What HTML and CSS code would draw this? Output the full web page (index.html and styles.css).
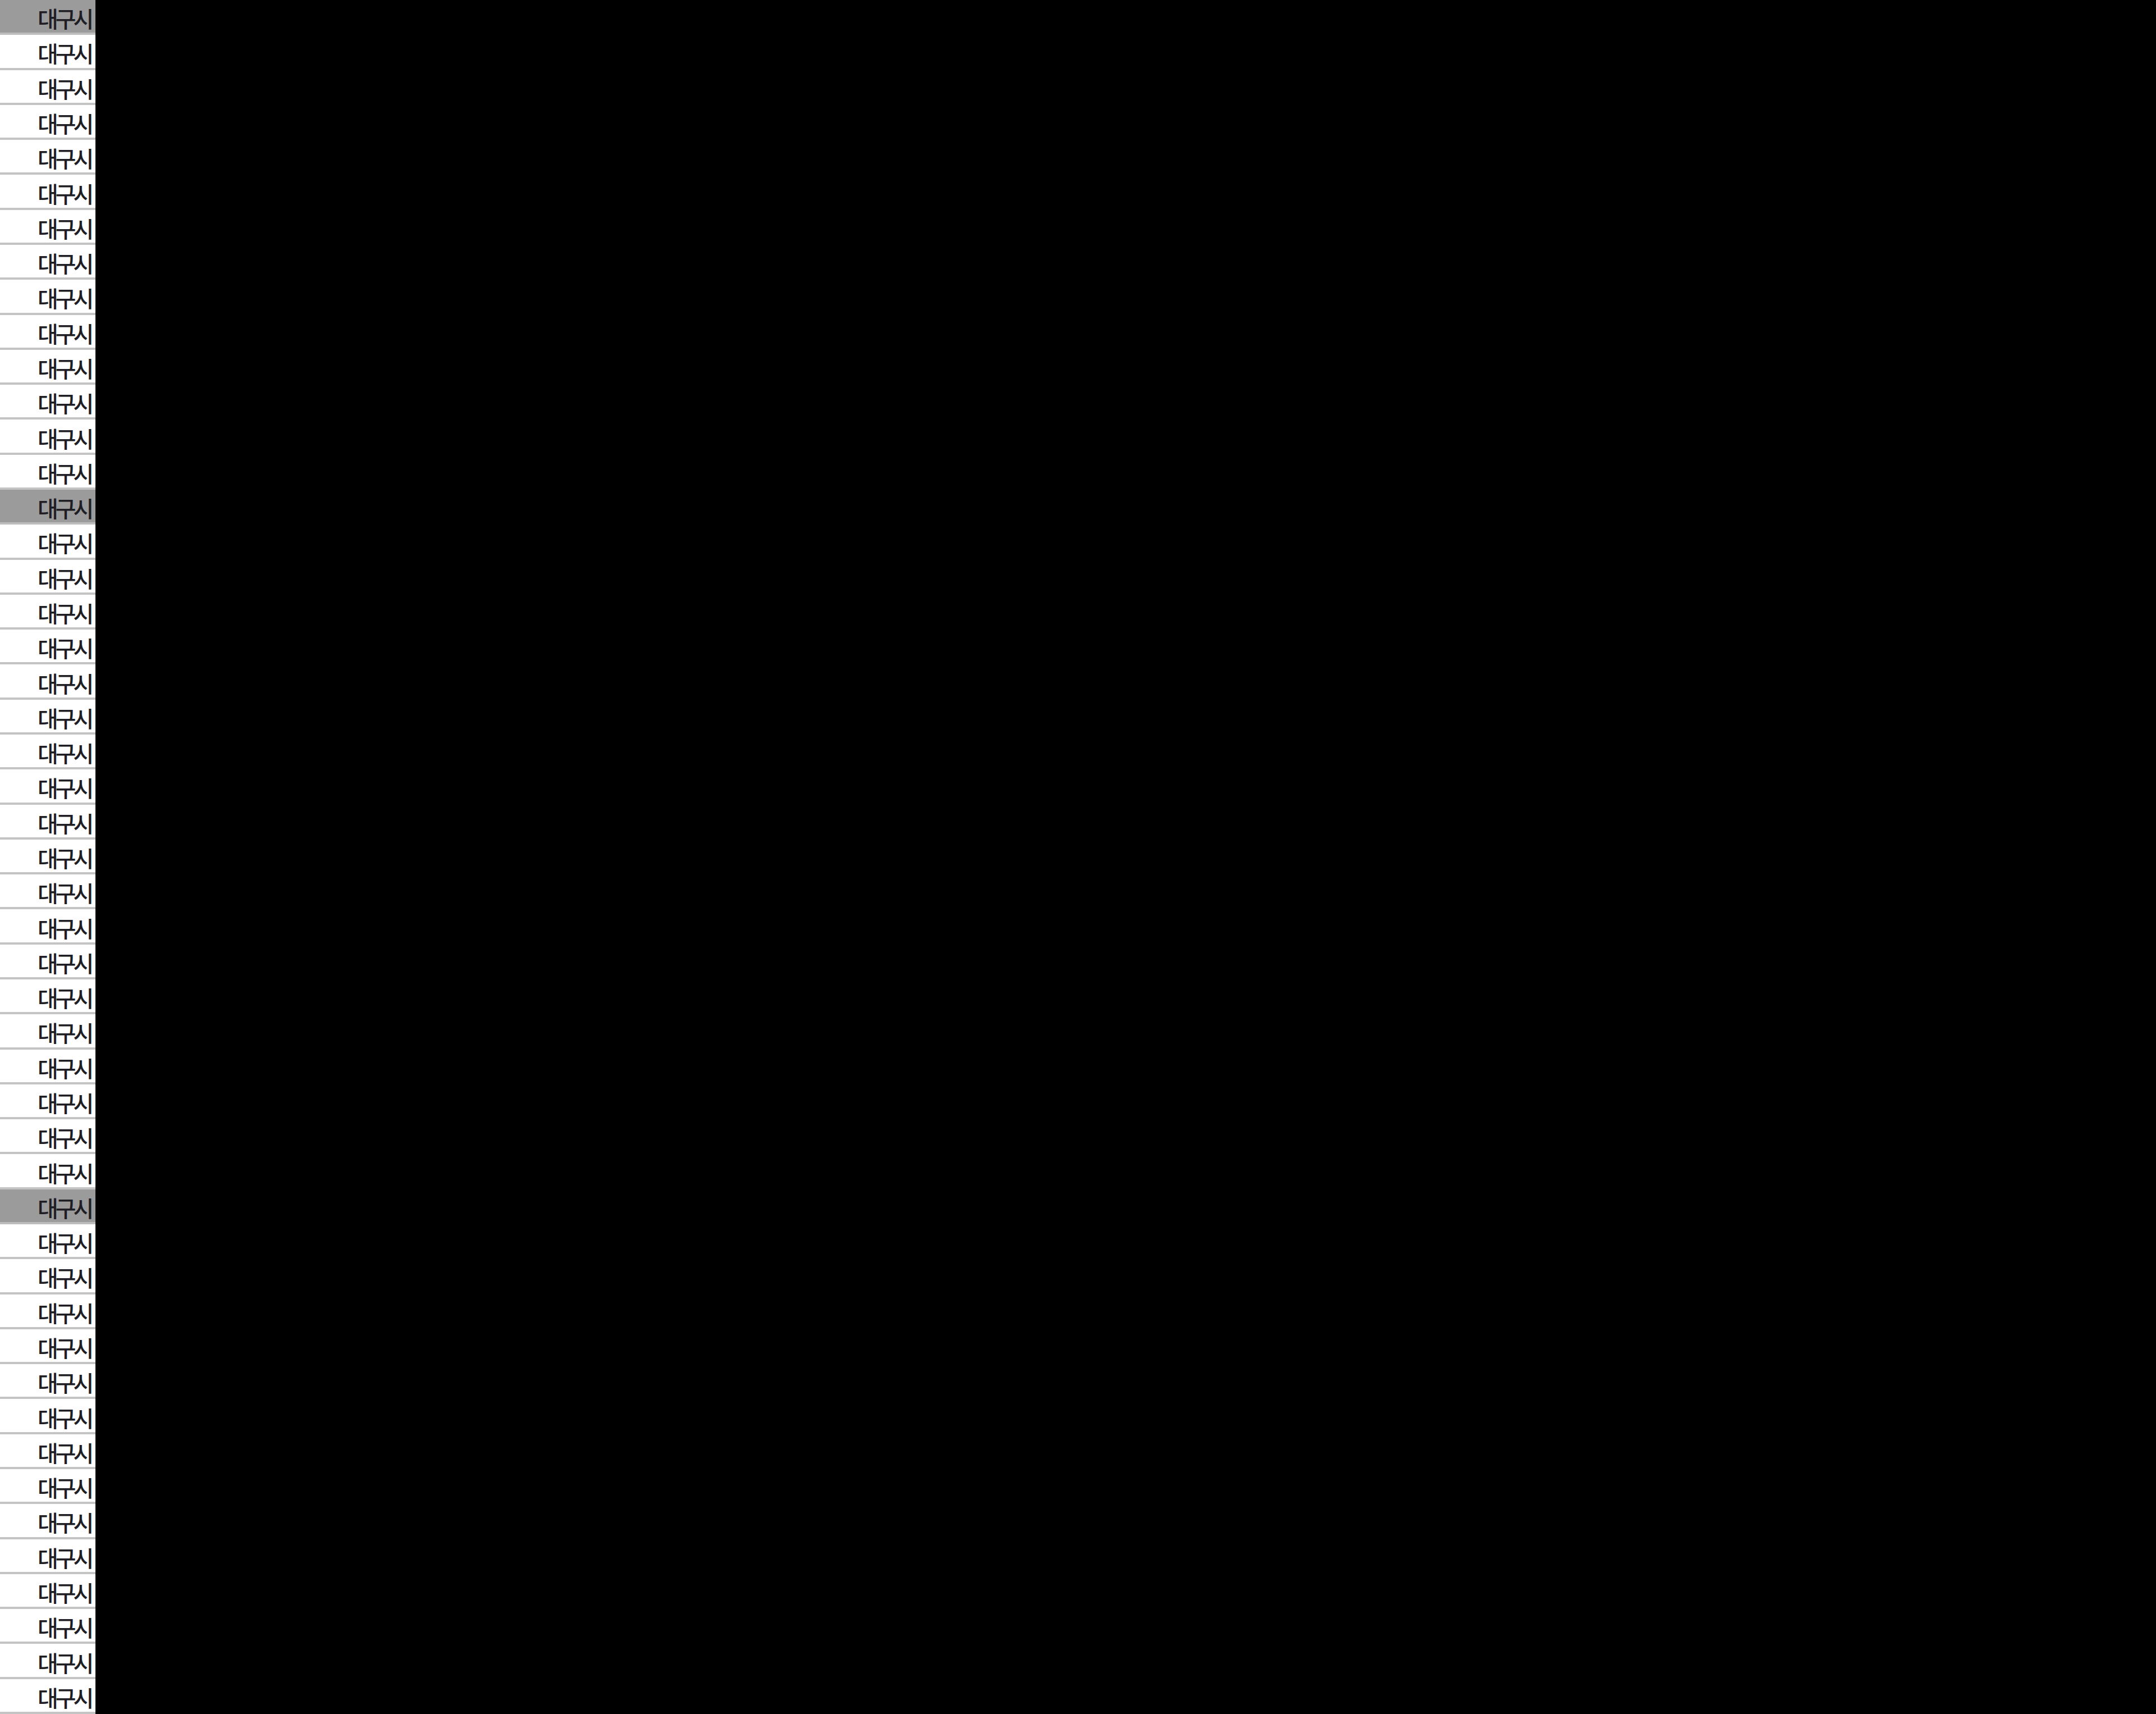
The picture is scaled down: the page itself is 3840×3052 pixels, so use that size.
FILE: index.html
```html
<!DOCTYPE html>
<html lang="ko">
<head>
<meta charset="utf-8">
<title>대구시</title>
<link rel="stylesheet" href="styles.css">
</head>
<body>
<div class="screen">
  <div class="list">
    <div class="row row-sel"><span class="cell-text">대구시</span></div>
    <div class="row"><span class="cell-text">대구시</span></div>
    <div class="row"><span class="cell-text">대구시</span></div>
    <div class="row"><span class="cell-text">대구시</span></div>
    <div class="row"><span class="cell-text">대구시</span></div>
    <div class="row"><span class="cell-text">대구시</span></div>
    <div class="row"><span class="cell-text">대구시</span></div>
    <div class="row"><span class="cell-text">대구시</span></div>
    <div class="row"><span class="cell-text">대구시</span></div>
    <div class="row"><span class="cell-text">대구시</span></div>
    <div class="row"><span class="cell-text">대구시</span></div>
    <div class="row"><span class="cell-text">대구시</span></div>
    <div class="row"><span class="cell-text">대구시</span></div>
    <div class="row"><span class="cell-text">대구시</span></div>
    <div class="row row-sel"><span class="cell-text">대구시</span></div>
    <div class="row"><span class="cell-text">대구시</span></div>
    <div class="row"><span class="cell-text">대구시</span></div>
    <div class="row"><span class="cell-text">대구시</span></div>
    <div class="row"><span class="cell-text">대구시</span></div>
    <div class="row"><span class="cell-text">대구시</span></div>
    <div class="row"><span class="cell-text">대구시</span></div>
    <div class="row"><span class="cell-text">대구시</span></div>
    <div class="row"><span class="cell-text">대구시</span></div>
    <div class="row"><span class="cell-text">대구시</span></div>
    <div class="row"><span class="cell-text">대구시</span></div>
    <div class="row"><span class="cell-text">대구시</span></div>
    <div class="row"><span class="cell-text">대구시</span></div>
    <div class="row"><span class="cell-text">대구시</span></div>
    <div class="row"><span class="cell-text">대구시</span></div>
    <div class="row"><span class="cell-text">대구시</span></div>
    <div class="row"><span class="cell-text">대구시</span></div>
    <div class="row"><span class="cell-text">대구시</span></div>
    <div class="row"><span class="cell-text">대구시</span></div>
    <div class="row"><span class="cell-text">대구시</span></div>
    <div class="row row-sel"><span class="cell-text">대구시</span></div>
    <div class="row"><span class="cell-text">대구시</span></div>
    <div class="row"><span class="cell-text">대구시</span></div>
    <div class="row"><span class="cell-text">대구시</span></div>
    <div class="row"><span class="cell-text">대구시</span></div>
    <div class="row"><span class="cell-text">대구시</span></div>
    <div class="row"><span class="cell-text">대구시</span></div>
    <div class="row"><span class="cell-text">대구시</span></div>
    <div class="row"><span class="cell-text">대구시</span></div>
    <div class="row"><span class="cell-text">대구시</span></div>
    <div class="row"><span class="cell-text">대구시</span></div>
    <div class="row"><span class="cell-text">대구시</span></div>
    <div class="row"><span class="cell-text">대구시</span></div>
    <div class="row"><span class="cell-text">대구시</span></div>
    <div class="row"><span class="cell-text">대구시</span></div>
  </div>
  <div class="blank"></div>
</div>
</body>
</html>
```
FILE: styles.css
```css
html, body {
  margin: 0;
  padding: 0;
  background: #000;
}
.screen {
  display: flex;
  width: 3840px;
  height: 3052px;
  overflow: hidden;
}
.list {
  width: 170px;
  flex: none;
  display: grid;
  grid-template-rows: repeat(49, 1fr);
  background: #fff;
}
.blank {
  flex: 1;
  background: #000;
}
.row {
  display: flex;
  align-items: center;
  padding-left: 67px;
  overflow: hidden;
  white-space: nowrap;
  background: #fff;
  border-bottom: 4px solid #c4c4c4;
  box-sizing: border-box;
}
.row-sel {
  background: #9b9b9b;
  border-bottom-color: #bdbdbd;
}
.cell-text {
  font-family: "Noto Sans CJK KR", "DejaVu Sans", sans-serif;
  font-size: 40px;
  font-weight: 500;
  line-height: 1;
  letter-spacing: -5px;
  color: #1e1e24;
  padding-top: 6px;
}
```
